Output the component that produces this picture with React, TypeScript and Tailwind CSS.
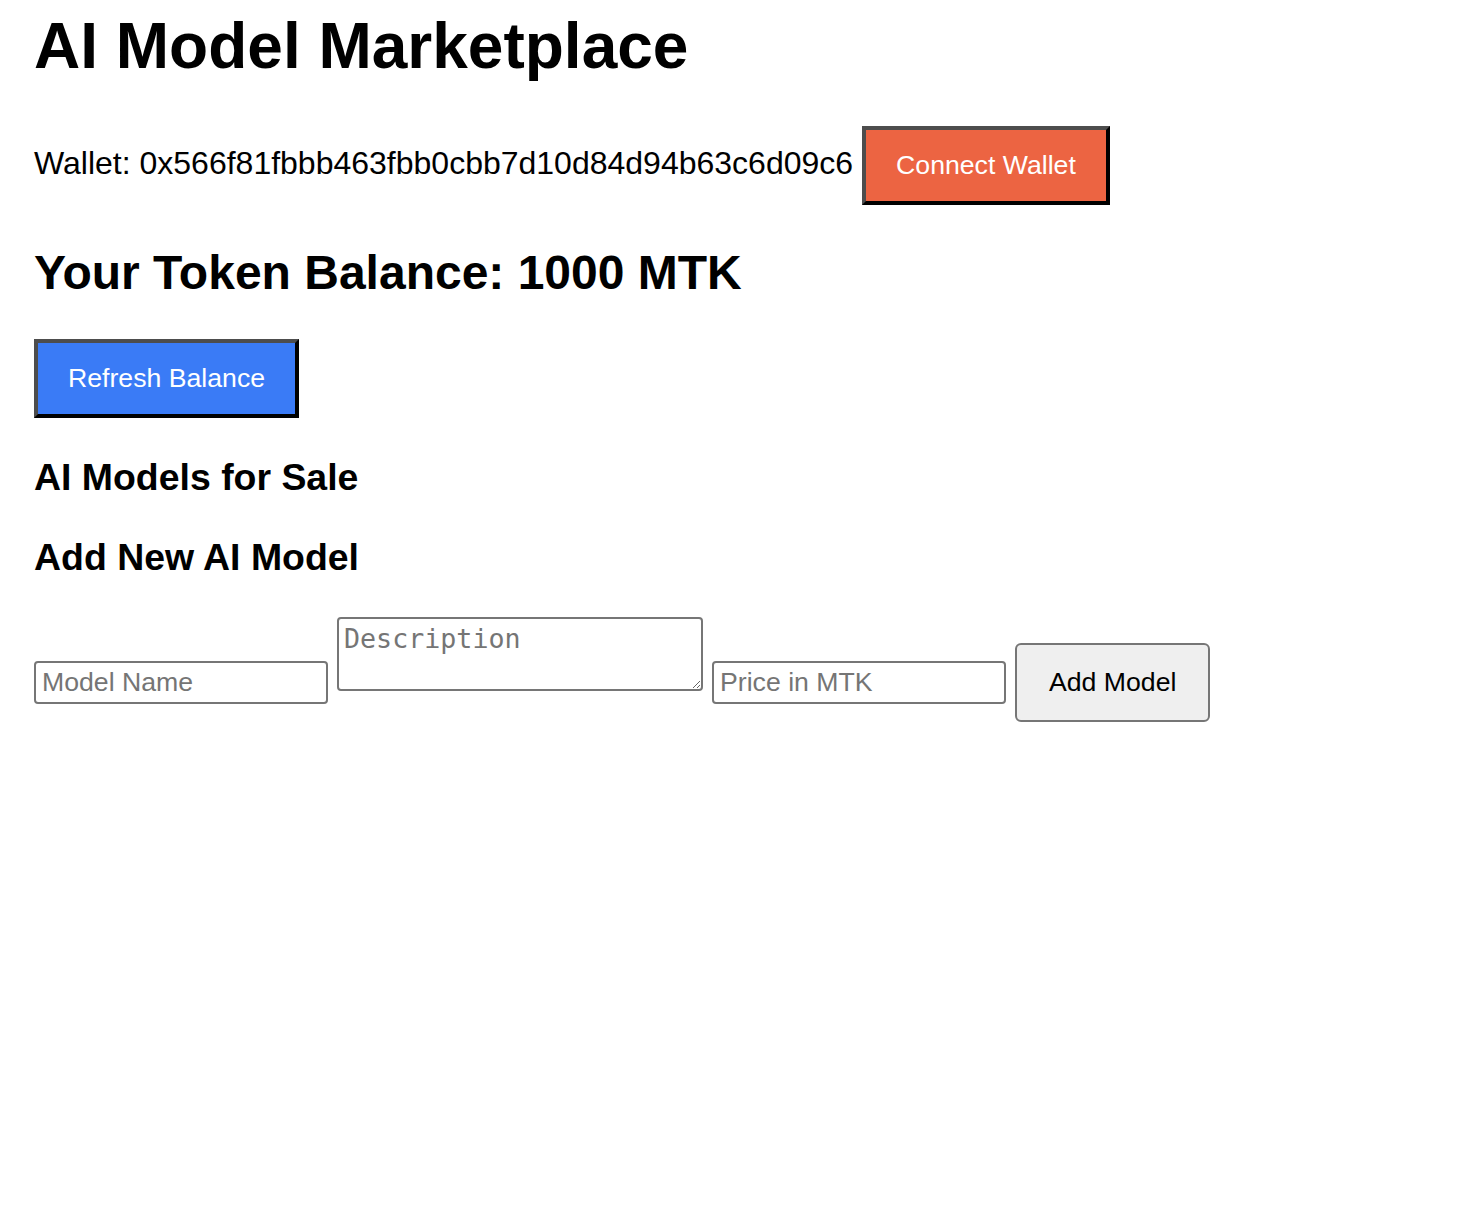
import { useState } from "react";

const WALLET = "0x566f81fbbb463fbb0cbb7d10d84d94b63c6d09c6";

export default function App() {
    const [name, setName] = useState("");
    const [description, setDescription] = useState("");
    const [price, setPrice] = useState("");
    const balance = 1000;

    const colorButton =
        "px-[30px] py-[20px] border-4 border-t-[#4d4d4d] border-l-[#4d4d4d] border-r-black border-b-black text-white text-[26.67px] leading-[normal] font-['Liberation_Sans',Arial,sans-serif]";

    return (
        <main className="min-h-screen bg-white px-[34px] text-black text-[32px] leading-[normal] font-['Liberation_Sans',Arial,sans-serif]">
            <h1 className="pt-[9px] text-[64px] font-bold leading-[normal]">AI Model Marketplace</h1>

            <div className="mt-[43px] flex items-baseline gap-[9px]">
                <span>Wallet: {WALLET}</span>
                <button className={`${colorButton} bg-[#ec6442]`}>Connect Wallet</button>
            </div>

            <h2 className="mt-[40px] text-[48px] font-bold leading-[normal]">Your Token Balance: {balance} MTK</h2>

            <div className="mt-[39px] flex">
                <button className={`${colorButton} bg-[#3a7bf6]`}>Refresh Balance</button>
            </div>

            <h3 className="mt-[38px] text-[37.44px] font-bold leading-[normal]">AI Models for Sale</h3>

            <h3 className="mt-[37px] text-[37.44px] font-bold leading-[normal]">Add New AI Model</h3>

            <div className="mt-[38px] flex items-start gap-[9px] text-[26.67px]">
                <input
                    value={name}
                    onChange={(e) => setName(e.target.value)}
                    placeholder="Model Name"
                    className="mt-[44px] w-[294px] h-[43px] px-[6px] border-2 border-[#767676] rounded-[4px] placeholder:text-[#757575] outline-none"
                />
                <textarea
                    value={description}
                    onChange={(e) => setDescription(e.target.value)}
                    placeholder="Description"
                    className="w-[366px] h-[74px] px-[5px] pt-[4px] border-2 border-[#767676] rounded-[4px] font-['DejaVu_Sans_Mono',monospace] text-[26.67px] leading-[normal] placeholder:text-[#757575] outline-none"
                />
                <input
                    value={price}
                    onChange={(e) => setPrice(e.target.value)}
                    placeholder="Price in MTK"
                    className="mt-[44px] w-[294px] h-[43px] px-[6px] border-2 border-[#767676] rounded-[4px] placeholder:text-[#757575] outline-none"
                />
                <button className="mt-[26px] px-[32px] py-[22px] bg-[#efefef] border-2 border-[#767676] rounded-[6px] leading-[normal]">
                    Add Model
                </button>
            </div>
        </main>
    );
}
